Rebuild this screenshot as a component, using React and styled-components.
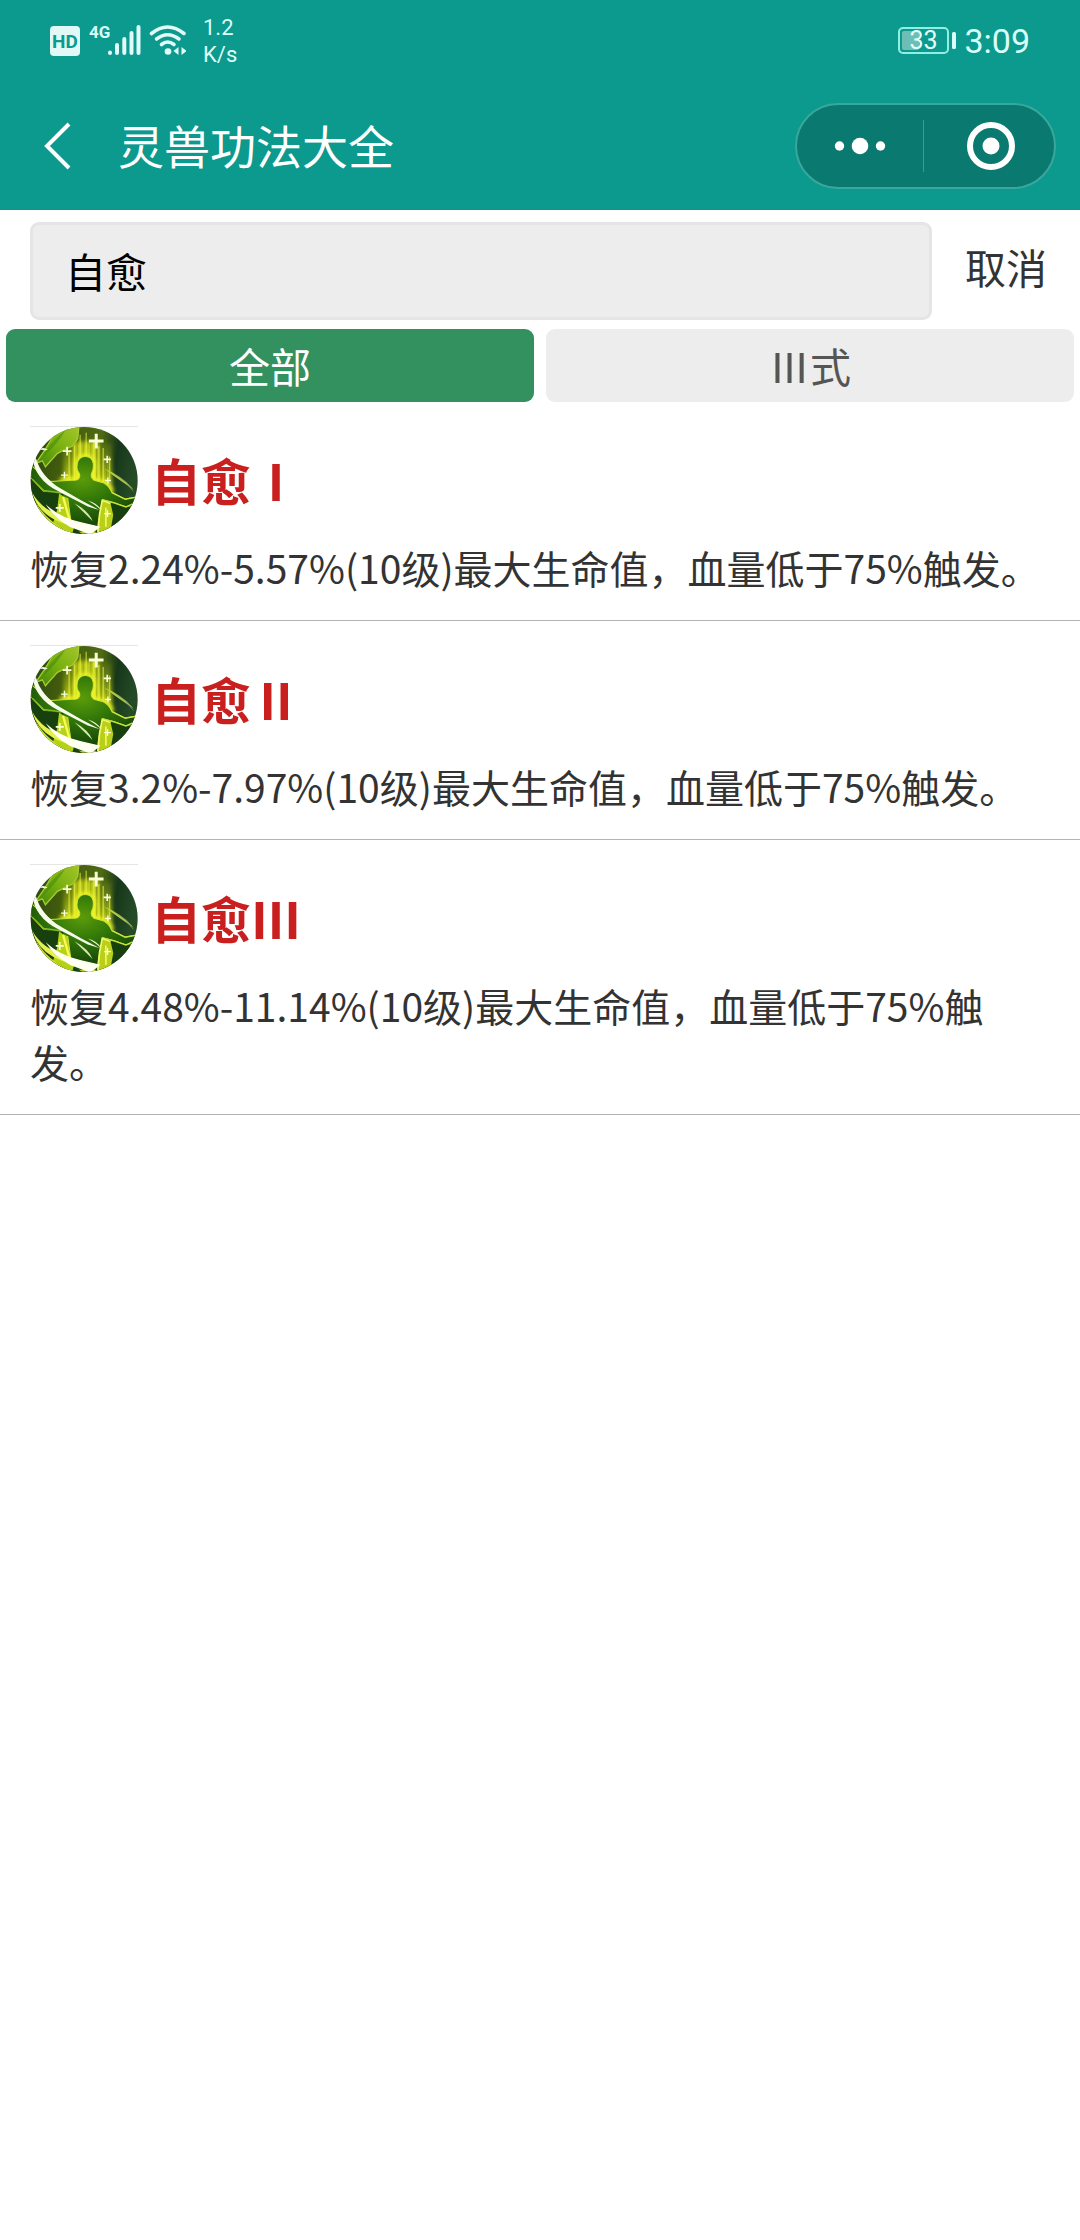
import React, { Fragment, useId, useState } from "react";
import styled, { createGlobalStyle } from "styled-components";

const GlobalStyle = createGlobalStyle`
  * {
    box-sizing: border-box;
  }
  body {
    margin: 0;
    background: #fff;
    color: #333;
    font-family: "Noto Sans CJK SC", "Noto Sans", sans-serif;
  }
  button,
  input {
    margin: 0;
    font-family: inherit;
  }
`;

const StatusBar = styled.div`
  display: flex;
  align-items: center;
  justify-content: space-between;
  height: 82px;
  padding: 0 50px;
  color: #d9fff9;
  font-family: Roboto, sans-serif;
`;

const StatusGroup = styled.div`
  display: flex;
  align-items: center;
  gap: ${props => props.$gap}px;
`;

const Speed = styled.div`
  font-size: 22px;
  line-height: 27px;
`;

const Clock = styled.time`
  font-size: 34px;
  line-height: 40px;
`;

const Header = styled.header`
  background: #0c998e;
`;

const NavBar = styled.div`
  display: flex;
  align-items: center;
  height: 128px;
  padding: 0 24px 0 34px;
`;

const BackButton = styled.button`
  display: flex;
  padding: 8px;
  border: 0;
  background: none;
`;

const Title = styled.h1`
  flex: 1;
  margin: 0 0 0 34px;
  padding-bottom: 4px;
  color: #fff;
  font-size: 46px;
  font-weight: 400;
  line-height: 64px;
`;

const Capsule = styled.div`
  display: flex;
  align-items: center;
  width: 261px;
  height: 86px;
  border: 2px solid #3aa79d;
  border-radius: 43px;
  background: #0a7a70;
`;

const CapsuleButton = styled.button`
  display: flex;
  flex: 1;
  align-items: center;
  justify-content: center;
  height: 52px;
  padding: 0;
  border: 0;
  background: none;

  & + & {
    padding-left: 4px;
    border-left: 1px solid #3f9a92;
  }
`;

const SearchRow = styled.form`
  display: flex;
  align-items: flex-start;
  padding: 12px 24px 9px 30px;
`;

const SearchInput = styled.input`
  flex: 1;
  min-width: 0;
  height: 98px;
  padding: 0 32px 2px;
  border: 3px solid #e5e5e5;
  border-radius: 9px;
  background: #ededed;
  color: #000;
  font-size: 41px;
  outline: none;
`;

const CancelButton = styled.button`
  height: 88px;
  padding: 0 9px 0 33px;
  border: 0;
  background: none;
  color: #333;
  font-size: 41px;
`;

const Tabs = styled.nav`
  display: flex;
  gap: 12px;
  padding: 0 6px;
`;

const Tab = styled.button`
  flex: 1;
  height: 73px;
  padding: 0;
  border: 0;
  border-radius: 9px;
  background: ${props => (props.$active ? "#339160" : "#ededed")};
  color: ${props => (props.$active ? "#fff" : "#555")};
  font-size: 41px;
  line-height: 73px;
`;

const SkillList = styled.ul`
  margin: 0;
  padding: 0;
  list-style: none;
`;

const SkillItem = styled.li`
  padding: 24px 30px 25px;
  border-bottom: 1px solid #b3b3b3;
`;

const SkillHead = styled.div`
  display: flex;
  align-items: center;
  gap: 13px;
`;

const SkillPicture = styled.div`
  display: flex;
  border-top: 1px solid #e6e6e6;
`;

const SkillName = styled.h2`
  margin: 0;
  padding-bottom: 2px;
  color: #c9201f;
  font-size: 50px;
  font-weight: 700;
  line-height: 72px;
`;

const SkillText = styled.p`
  margin: 5px 0 0;
  font-size: 39px;
  line-height: 56px;
`;

const SignalIcons = () => (
  <svg width="136" height="46" viewBox="50 18 136 46" aria-hidden="true">
    <rect x="50" y="26" width="30" height="30" rx="4" fill="#e2f8f6" />
    <text
      x="65"
      y="48"
      fill="#0c998e"
      fontFamily="Roboto"
      fontSize="19"
      fontWeight="700"
      textAnchor="middle"
    >
      HD
    </text>
    <text
      x="89"
      y="38"
      fill="#d9fff9"
      fontFamily="Roboto"
      fontSize="17"
      fontWeight="700"
    >
      4G
    </text>
    <g stroke="#e2faf8" strokeWidth="4" strokeLinecap="round">
      <path d="M110 52.500v.5M117 45v8M124.300 39v14M131.500 33v20M138.500 27v26" />
    </g>
    <g stroke="#e2faf8" strokeWidth="3.600" strokeLinecap="round" fill="none">
      <path d="M151.500 33.500Q167.500 20.500 184 33.500" />
      <path d="M156.500 39Q167.500 30.500 179 39" />
      <path d="M161.500 44.500Q167.500 39.500 174 44.500" />
    </g>
    <circle cx="168" cy="51.500" r="3.300" fill="#e2faf8" />
    <path d="M178.500 47v8l-5-4zM181.500 47v8l5-4z" fill="#e2faf8" />
  </svg>
);

const Battery = () => (
  <svg width="58" height="28" viewBox="898 27 58 28" role="img">
    <rect
      x="899"
      y="28"
      width="49"
      height="25"
      rx="4"
      fill="none"
      stroke="#8ff0e2"
      strokeWidth="2"
    />
    <rect x="902" y="31" width="17" height="19" rx="2" fill="#6dbfb6" />
    <rect x="952" y="32" width="4" height="17" rx="1.500" fill="#d9fff9" />
    <text
      x="923.500"
      y="49"
      fill="#e2fffb"
      fontFamily="Roboto"
      fontSize="25"
      textAnchor="middle"
    >
      33
    </text>
  </svg>
);

const Cross = ({ x, y, size, width = 5 }) => (
  <path
    d={`M${x - size} ${y}h${size * 2}M${x} ${y - size}v${size * 2}`}
    stroke="#fbffd8"
    strokeWidth={width}
  />
);

const SkillIcon = () => {
  const id = useId();
  const url = name => `url(#${id}${name})`;

  return (
    <svg width="108" height="107" viewBox="31 37 323 320" aria-hidden="true">
      <defs>
        <clipPath id={`${id}clip`}>
          <circle cx="193" cy="197" r="160" />
        </clipPath>
        <linearGradient id={`${id}back`} x1="0" x2="1" y1="0" y2="0.200">
          <stop offset="0" stopColor="#24431a" />
          <stop offset="0.300" stopColor="#3f5a0c" />
          <stop offset="0.650" stopColor="#4f6a14" />
          <stop offset="0.820" stopColor="#17371b" />
          <stop offset="1" stopColor="#244a26" />
        </linearGradient>
        <linearGradient id={`${id}beam`} x1="0" x2="0" y1="0" y2="1">
          <stop offset="0" stopColor="#8a9c10" stopOpacity="0.300" />
          <stop offset="0.400" stopColor="#dcea1c" />
          <stop offset="1" stopColor="#e6f02b" />
        </linearGradient>
        <radialGradient id={`${id}body`} cx="0.480" cy="0.300" r="0.600">
          <stop offset="0" stopColor="#5c9c0a" />
          <stop offset="0.450" stopColor="#347a08" />
          <stop offset="1" stopColor="#174a08" />
        </radialGradient>
        <linearGradient id={`${id}leaf`} x1="1" x2="0" y1="0" y2="1">
          <stop offset="0" stopColor="#a4c629" />
          <stop offset="0.500" stopColor="#76b010" />
          <stop offset="1" stopColor="#3f850a" />
        </linearGradient>
        <filter id={`${id}soft`} x="-30%" y="-30%" width="160%" height="160%">
          <feGaussianBlur stdDeviation="6" />
        </filter>
      </defs>
      <g clipPath={url("clip")}>
        <rect x="30" y="37" width="324" height="320" fill={url("back")} />
        <path
          d="M132 85h144v270H132z"
          fill={url("beam")}
          opacity="0.800"
          filter={url("soft")}
        />
        <path
          d="M160 80h76v120h-76z"
          fill="#e3ee1a"
          opacity="0.700"
          filter={url("soft")}
        />
        <g stroke="#f2f74c" strokeWidth="4" opacity="0.600">
          <path d="M148 110v90M164 92v110M181 60v65M199 54v68M222 75v130M237 94v112M250 100v100M269 125v70" />
        </g>
        <g stroke="#5a7206" strokeWidth="3" opacity="0.400">
          <path d="M156 60v140M172 48v95M190 44v80M213 48v85M230 52v140M244 60v142M259 70v130" />
        </g>
        {/* glow round the figure, then the figure itself */}
        <path
          d="M120 196L155 196Q175 199 179 187Q182 180 176 172Q169 166 173 143Q178 125 197 125Q216 125 220 145Q222 163 216 174Q210 188 222 196L250 204Q266 211 276 233"
          fill="none"
          stroke="#f4f82b"
          strokeWidth="14"
          filter={url("soft")}
        />
        <path
          d="M92 200L155 196Q175 199 179 187Q182 180 176 172Q169 166 173 143Q178 125 197 125Q216 125 220 145Q222 163 216 174Q210 188 222 196L250 204Q266 211 276 233L315 252 353 246V274L318 276 281 263 248 254 231 352H158L144 251 70 229 33 190V150L62 176Z"
          fill={url("body")}
          stroke="#cfe62a"
          strokeWidth="3"
        />
        <path d="M33 190L70 230 130 238 144 330 193 360H33Z" fill="#17400e" />
        <path
          d="M38 193L72 227 126 234"
          fill="none"
          stroke="#86bb24"
          strokeWidth="4"
        />
        <path d="M250 255L282 264 317 277 353 270V360H226Z" fill="#17400e" />
        <path
          d="M276 233L316 253 353 246M246 255L282 264 318 276 338 267"
          fill="none"
          stroke="#c7e23a"
          strokeWidth="4"
        />
        <path
          d="M247 257L272 266 280 300 272 345 232 357Q231 324 239 296Z"
          fill="#b9cf19"
        />
        <path
          d="M272 266L247 257 239 298 234 352M258 278V335"
          fill="none"
          stroke="#f2f76a"
          strokeWidth="5"
        />
        <path
          d="M118 236L143 252Q141 296 163 337L157 357 100 323 112 285Z"
          fill="#b5d216"
        />
        <path
          d="M130 246L148 310 158 336"
          fill="none"
          stroke="#f8fa56"
          strokeWidth="7"
        />
        {/* leaf */}
        <path
          d="M98 67L128 36H177L174 71 159 93 113 116 77 156 68 138 48 146 76 105Z"
          fill={url("leaf")}
          stroke="#a6cb31"
          strokeWidth="4"
        />
        <path
          d="M66 132Q94 78 137 47Q115 86 66 132Z"
          fill="#3f850a"
          opacity="0.500"
        />
        <path d="M54 106Q68 94 84 104L76 107Q64 101 51 111Z" fill="#f4f8e8" />
        {/* blades of light that sweep over the lower left */}
        <path
          d="M38 122Q42 192 117 230L204 275 240 286Q180 256 124 222Q64 186 48 128Z"
          fill="#f7fbea"
        />
        <path
          d="M37 232Q52 285 101 312Q142 334 210 343L240 336 195 326Q124 311 80 281Q52 260 37 232Z"
          fill="#e6f04c"
        />
        <path
          d="M78 268Q120 308 181 321L242 335 212 359 151 336Q104 310 78 268Z"
          fill="#fffff2"
        />
        <path
          d="M48 262Q85 325 158 354L126 352Q68 321 48 262Z"
          fill="#cfe02d"
        />
        <path d="M164 265L218 318Q206 288 164 265Z" fill="#d5e8b0" />
        <path d="M204 257Q231 264 245 286Q226 270 204 257Z" fill="#e7f4ca" />
        <path d="M252 161Q298 178 341 224Q290 190 252 161Z" fill="#b9d03d" />
        <path
          d="M281 178Q325 194 343 234L315 203Z"
          fill="#8aa56f"
          opacity="0.700"
        />
        <Cross x={229} y={79} size={22} width={9} />
        <Cross x={142} y={109} size={13} />
        <Cross x={262} y={134} size={11} />
        <Cross x={134} y={181} size={10} width={4} />
        <Cross x={264} y={197} size={9} width={4} />
        <Cross x={120} y={279} size={12} />
        <Cross x={263} y={296} size={10} width={4} />
      </g>
    </svg>
  );
};

const tabs = [
  { key: "all", label: "全部" },
  { key: "three", label: "Ⅲ式" }
];

const skills = [
  {
    name: "自愈Ⅰ",
    level: "three",
    text: "恢复2.24%-5.57%(10级)最大生命值，血量低于75%触发。"
  },
  {
    name: "自愈Ⅱ",
    level: "three",
    text: "恢复3.2%-7.97%(10级)最大生命值，血量低于75%触发。"
  },
  {
    name: "自愈Ⅲ",
    level: "three",
    text: "恢复4.48%-11.14%(10级)最大生命值，血量低于75%触发。"
  }
];

const Skill = ({ name, text }) => (
  <SkillItem>
    <SkillHead>
      <SkillPicture>
        <SkillIcon />
      </SkillPicture>
      <SkillName>{name}</SkillName>
    </SkillHead>
    <SkillText>{text}</SkillText>
  </SkillItem>
);

const App = () => {
  const [keyword, setKeyword] = useState("自愈");
  const [activeTab, setActiveTab] = useState("all");

  return (
    <Fragment>
      <GlobalStyle />
      <Header>
        <StatusBar>
          <StatusGroup $gap={17}>
            <SignalIcons />
            <Speed>
              1.2
              <br />
              K/s
            </Speed>
          </StatusGroup>
          <StatusGroup $gap={8}>
            <Battery />
            <Clock>3:09</Clock>
          </StatusGroup>
        </StatusBar>
        <NavBar>
          <BackButton type="button" aria-label="返回">
            <svg width="34" height="50" viewBox="0 0 34 50">
              <path
                d="M27 3L5 25l22 22"
                fill="none"
                stroke="#fff"
                strokeWidth="4"
              />
            </svg>
          </BackButton>
          <Title>灵兽功法大全</Title>
          <Capsule>
            <CapsuleButton type="button" aria-label="更多">
              <svg width="52" height="18" viewBox="0 0 52 18" fill="#fff">
                <circle cx="5.500" cy="9" r="4.700" />
                <circle cx="26" cy="9" r="8.300" />
                <circle cx="46.500" cy="9" r="4.700" />
              </svg>
            </CapsuleButton>
            <CapsuleButton type="button" aria-label="关闭">
              <svg width="48" height="48" viewBox="0 0 48 48">
                <circle
                  cx="24"
                  cy="24"
                  r="21"
                  fill="none"
                  stroke="#fff"
                  strokeWidth="6"
                />
                <circle cx="24" cy="24" r="8.500" fill="#fff" />
              </svg>
            </CapsuleButton>
          </Capsule>
        </NavBar>
      </Header>
      <main>
        <SearchRow onSubmit={e => e.preventDefault()}>
          <SearchInput
            type="text"
            aria-label="搜索"
            value={keyword}
            onChange={e => setKeyword(e.target.value)}
          />
          <CancelButton type="button" onClick={() => setKeyword("")}>
            取消
          </CancelButton>
        </SearchRow>
        <Tabs>
          {tabs.map(({ key, label }) => (
            <Tab
              key={key}
              type="button"
              $active={key === activeTab}
              onClick={() => setActiveTab(key)}
            >
              {label}
            </Tab>
          ))}
        </Tabs>
        <SkillList>
          {skills
            .filter(({ level }) => activeTab === "all" || level === activeTab)
            .map(({ name, text }) => (
              <Skill key={name} name={name} text={text} />
            ))}
        </SkillList>
      </main>
    </Fragment>
  );
};

export default App;
